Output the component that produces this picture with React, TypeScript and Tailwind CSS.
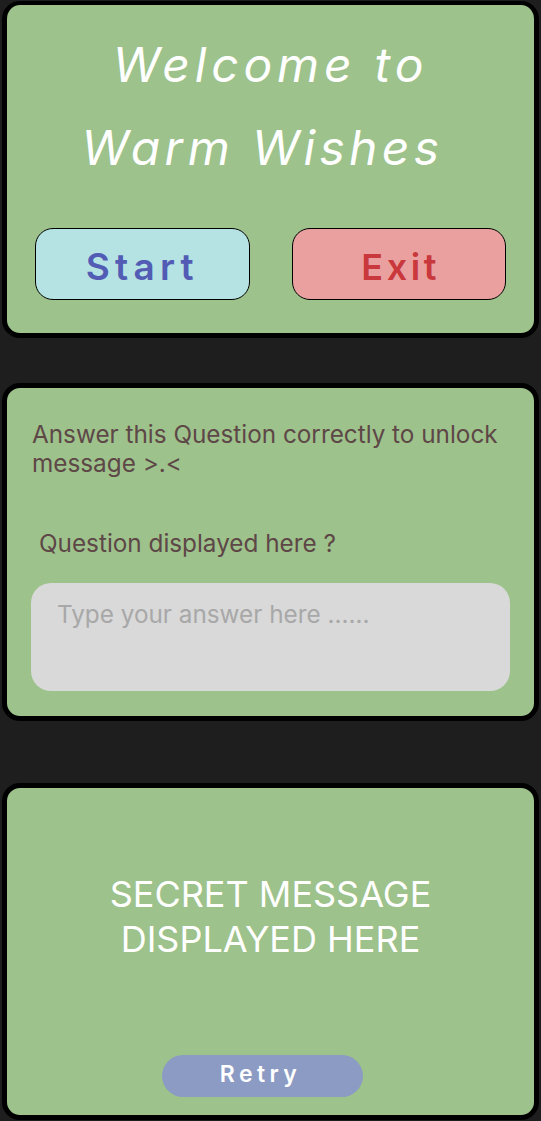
import React from "react";

const font = { fontFamily: "Inter, 'Noto Sans', sans-serif" };

export default function App() {
  return (
    <div
      className="w-[541px] h-[1121px] bg-[#1e1e1e] flex flex-col pt-[1px] px-[2px] overflow-hidden"
      style={font}
    >
      {/* Card 1 */}
      <div className="h-[337px] bg-[#9dc28b] border-[5px] border-t-4 border-black rounded-[18px] flex flex-col pt-[18px] px-[28px]">
        <h1 className="flex flex-col items-center text-white italic font-normal text-[48px] leading-[83px]">
          <span className="tracking-[0.1em]">Welcome to</span>
          <span className="tracking-[0.09em] pr-[16px]">Warm Wishes</span>
        </h1>
        <div className="grid grid-cols-2 gap-[42px] mt-[39px]">
          <button className="h-[72px] pt-[5px] rounded-[18px] border border-black bg-[#b5e3e3] text-[#525cb4] text-[37px] font-semibold tracking-[0.14em]">
            Start
          </button>
          <button className="h-[72px] pt-[5px] pl-[4px] rounded-[18px] border border-black bg-[#eba0a0] text-[#c8383c] text-[36px] font-semibold tracking-[0.1em]">
            Exit
          </button>
        </div>
      </div>

      {/* Card 2 */}
      <div className="mt-[45px] h-[338px] bg-[#9dc28b] border-[5px] border-black rounded-[18px] flex flex-col pt-[32px] px-[24px] text-[#5d4747]">
        <p className="text-[24.3px] leading-[29px] pl-[1px]">
          Answer this Question correctly to unlock message &gt;.&lt;
        </p>
        <p className="text-[24.3px] leading-[29px] mt-[51px] pl-[8px]">
          Question displayed here ?
        </p>
        <textarea
          className="mt-[25px] h-[108px] w-full resize-none rounded-[20px] bg-[#d9d9d9] pl-[26px] pt-[17px] text-[24.3px] leading-[29px] outline-none placeholder:text-[#a8a8a8]"
          placeholder="Type your answer here ......"
          style={font}
        />
      </div>

      {/* Card 3 */}
      <div className="mt-[62px] h-[337px] bg-[#9dc28b] border-[5px] border-black rounded-[18px] flex flex-col items-center pt-[84px]">
        <p className="text-center text-white text-[36px] leading-[45px] font-normal">
          SECRET MESSAGE
          <br />
          DISPLAYED HERE
        </p>
        <button className="self-start ml-[155px] mt-[93px] w-[201px] h-[42px] pb-[4px] pr-[4px] rounded-full bg-[#8b9bc4] text-white text-[23px] font-semibold tracking-[0.19em]">
          Retry
        </button>
      </div>
    </div>
  );
}
